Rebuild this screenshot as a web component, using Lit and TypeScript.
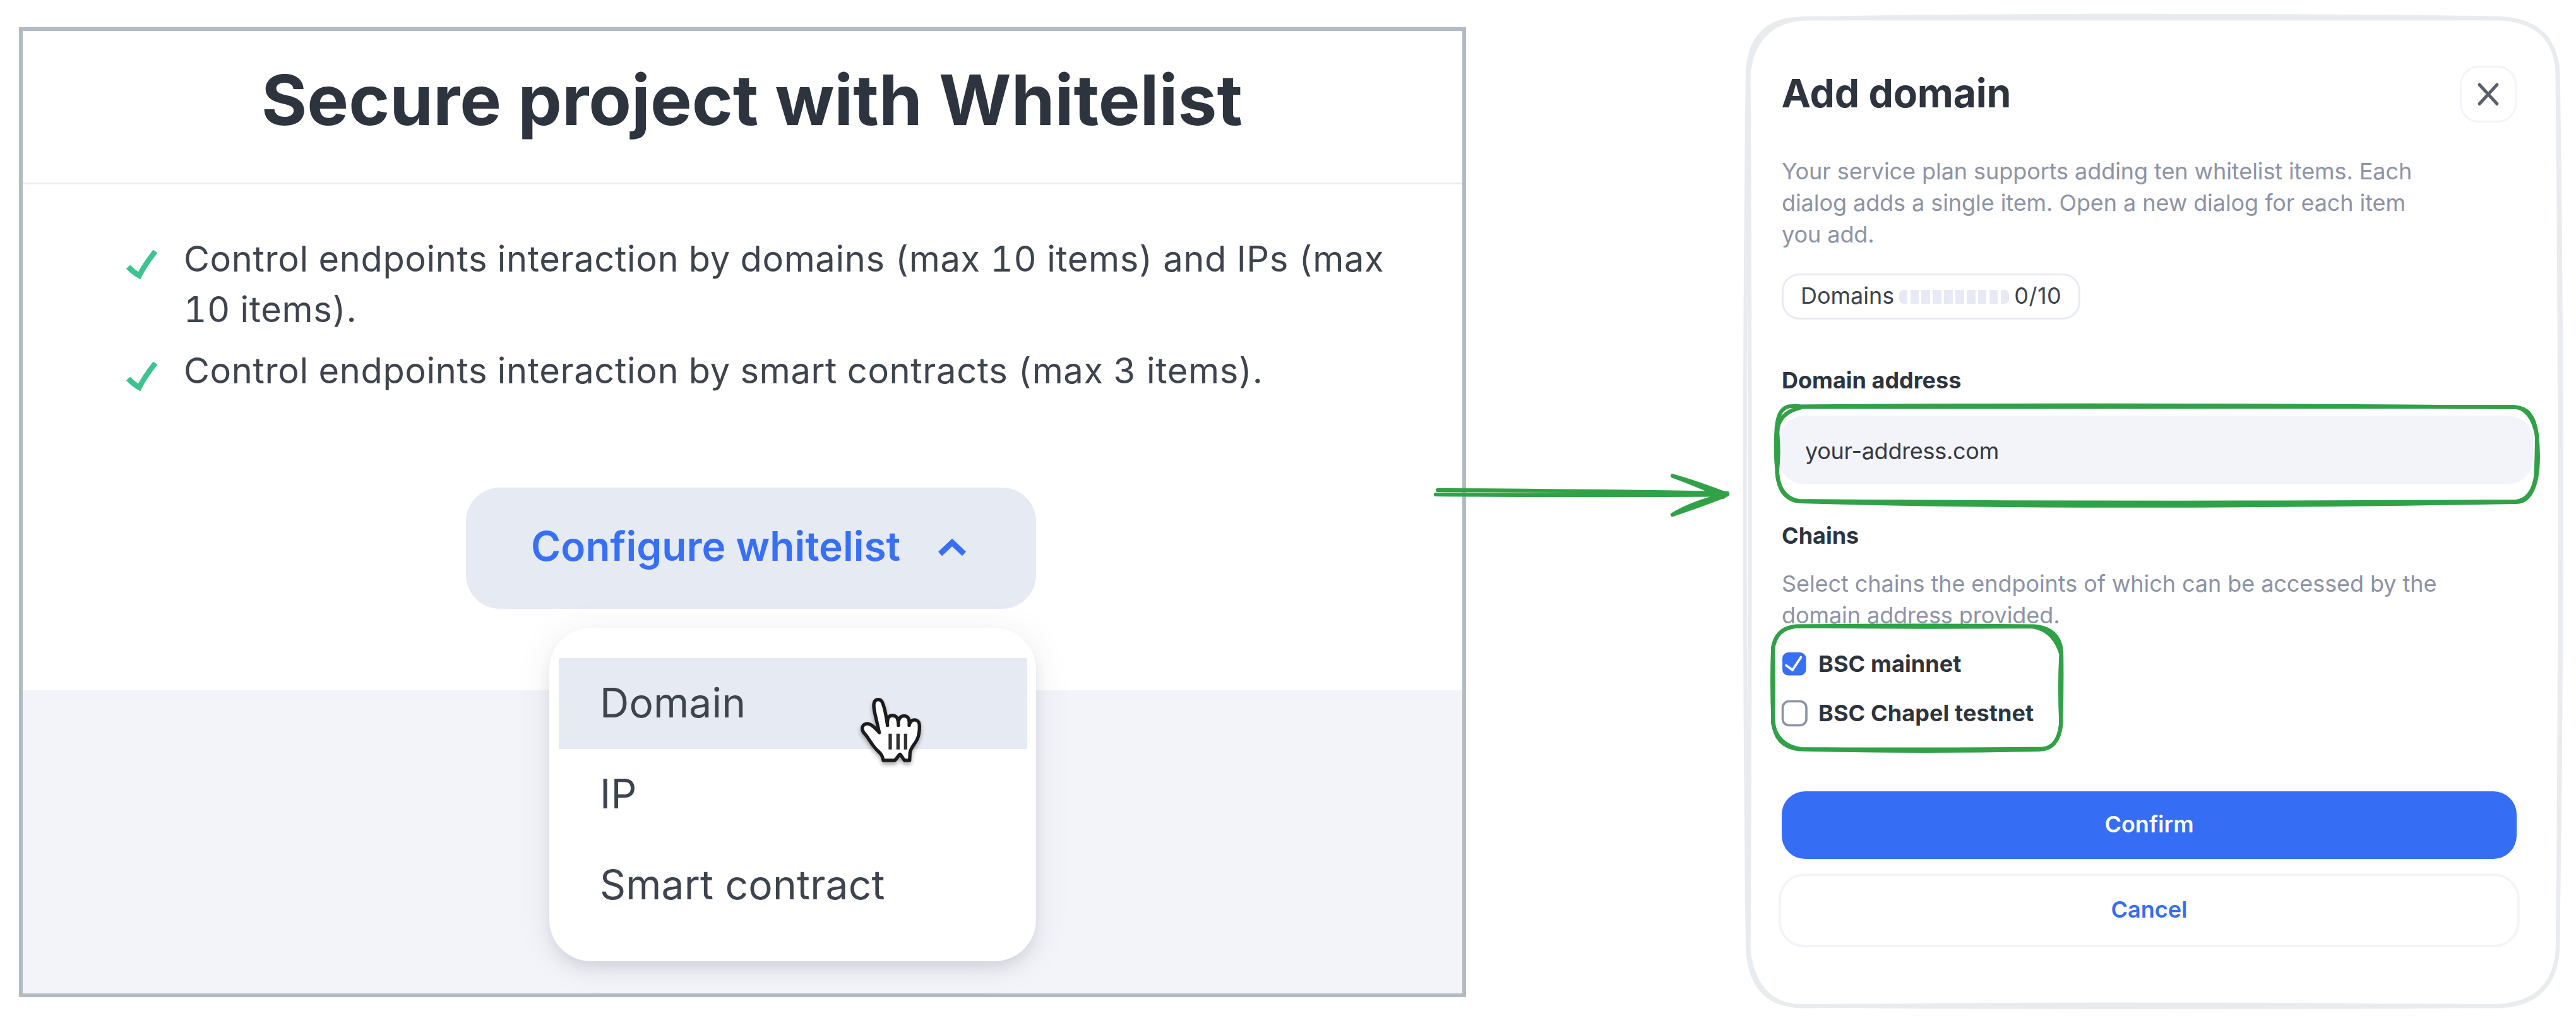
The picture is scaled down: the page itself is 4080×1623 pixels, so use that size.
import { LitElement, html, css, svg } from "lit";
import { customElement, property } from "lit/decorators.js";
import { classMap } from "lit/directives/class-map.js";

const FEATURES = [
  "Control endpoints interaction by domains (max 10 items) and IPs (max 10 items).",
  "Control endpoints interaction by smart contracts (max 3 items).",
];
const MENU = ["Domain", "IP", "Smart contract"];
const CHAINS = [
  { name: "BSC mainnet", checked: true },
  { name: "BSC Chapel testnet", checked: false },
];

/* Left side: project panel with its dropdown open */
@customElement("whitelist-panel")
class WhitelistPanel extends LitElement {
  static styles = css`
    :host { display: block; }
    * { box-sizing: border-box; }
    .panel {
      position: relative;
      display: flex;
      flex-direction: column;
      width: 2292px;
      height: 1536px;
      border: 6px solid #b1bcc1;
      background: #fff;
    }
    .header {
      height: 243px;
      padding: 54px 0 0 378px;
      border-bottom: 3px solid #e7ecf4;
    }
    h1 {
      margin: 0;
      font-size: 110.5px;
      line-height: 110px;
      font-weight: 700;
      color: #2d343e;
      white-space: nowrap;
    }
    .body { height: 801px; padding-top: 77.6px; }
    ul { margin: 0; padding: 0; list-style: none; display: flex; flex-direction: column; gap: 17px; }
    li {
      display: flex;
      padding-left: 164px;
      font-size: 56px;
      line-height: 80px;
      letter-spacing: 0.65px;
      font-variant-numeric: tabular-nums;
      color: #3d444d;
    }
    .tick { flex: none; width: 50px; height: 46px; margin: 26px 41px 0 0; }
    .feature { width: 1930px; }
    .trigger {
      display: flex;
      align-items: center;
      width: 903px;
      height: 192px;
      margin: 145px 0 0 702px;
      padding: 0 0 5px 103px;
      border: 0;
      border-radius: 54px;
      background: #e6eaf3;
      color: #376ff6;
      font: 600 64px/78px Inter, "Liberation Sans", sans-serif;
    }
    .chevron { width: 44px; height: 28px; margin: 2px 0 0 60px; }
    .footer { flex: 1; background: #f3f4f9; }
    .menu {
      position: absolute;
      left: 834px;
      top: 944.5px;
      width: 771px;
      height: 528px;
      padding: 48px 14.5px;
      border-radius: 66px;
      background: #fff;
      box-shadow: 0 14px 24px -4px rgba(45, 52, 80, 0.13), 0 6px 60px rgba(45, 52, 80, 0.08);
    }
    .item {
      display: flex;
      align-items: center;
      height: 144px;
      padding: 0 0 3px 65.5px;
      font-size: 64px;
      letter-spacing: 0.24px;
      color: #3d444d;
    }
    .hover { background: #e6eaf3; }
    .cursor { position: absolute; left: 1264px; top: 1011px; width: 220px; height: 180px; filter: drop-shadow(0 4px 3px rgba(0, 0, 0, 0.35)); }
  `;
  render() {
    return html`<section class="panel">
      <header class="header"><h1>Secure project with Whitelist</h1></header>
      <div class="body">
        <ul>
          ${FEATURES.map(
            (t) => html`<li>
              <svg class="tick" viewBox="0 0 50 46" fill="none" stroke="#3cc38f" stroke-width="8.5" stroke-linejoin="miter">
                <path d="M3 26.5Q11 35 20.5 40.5Q28 25 46 2" />
              </svg>
              <span class="feature">${t}</span>
            </li>`
          )}
        </ul>
        <button class="trigger">
          Configure whitelist
          <svg class="chevron" viewBox="0 0 44 28" fill="none" stroke="#376ff6" stroke-width="9"><path d="M3 25L22 7L41 25" /></svg>
        </button>
      </div>
      <div class="footer"></div>
      <div class="menu">
        ${MENU.map((m, i) => html`<div class=${classMap({ item: true, hover: i === 0 })}>${m}</div>`)}
      </div>
      <svg class="cursor" viewBox="0 0 660 540">
        <path
          fill="#fff" stroke="#1c1c1e" stroke-width="16" stroke-linejoin="round"
          d="M278 300L262 230C252 190 248 165 256 152C264 140 282 140 290 152C300 170 310 215 317 266C314 228 325 219 340 219C358 219 368 228 369 266C366 232 380 221 396 221C413 221 423 232 420 266C424 246 436 238 450 240C464 243 469 252 469 270C469 295 467 312 459 330C448 355 427 370 424 395L422 432H398C390 425 382 405 376 403C370 405 362 425 350 432H297C294 410 285 400 272 388C250 368 240 350 222 322C210 305 195 295 197 278C200 260 218 254 232 260C252 268 264 285 278 300Z"
        />
        <path fill="none" stroke="#333" stroke-width="16" d="M330 305V380M367 305V380M403 305V380" />
      </svg>
    </section>`;
  }
}

@customElement("chain-option")
class ChainOption extends LitElement {
  @property() name = "";
  @property({ type: Boolean }) checked = false;
  static styles = css`
    :host { display: flex; align-items: center; gap: 18px; height: 44px; font-size: 36px; line-height: 44px; font-weight: 700; letter-spacing: 0.1px; color: #2d343e; }
    svg { flex: none; width: 40px; height: 42px; overflow: visible; }
  `;
  render() {
    return html`<svg viewBox="0 0 40 42" fill="none">
        ${this.checked
          ? svg`<rect x="1" y="3" width="37.5" height="36.5" rx="9.5" fill="#376ff6"/><path d="M7 23.5L17 31L30.5 10.5" stroke="#fff" stroke-width="3.8" stroke-linecap="round" stroke-linejoin="round"/>`
          : svg`<rect x="1.5" y="2.5" width="37.5" height="38" rx="10" stroke="#8b92a5" stroke-width="3.6"/>`}
      </svg>
      <span>${this.name}</span>`;
  }
}

/* Right side: the dialog opened by the menu item */
@customElement("domain-dialog")
class DomainDialog extends LitElement {
  static styles = css`
    :host { display: flex; flex-direction: column; width: 1164px; color: #2d343e; font-size: 36px; }
    * { box-sizing: border-box; }
    .head { display: flex; justify-content: space-between; align-items: flex-start; height: 90px; }
    h2 { margin: 0 0 0 -0.5px; font-size: 62.5px; line-height: 87px; font-weight: 700; letter-spacing: -0.2px; }
    .close { width: 90px; height: 90px; padding: 0; border: 3px solid #f2f4fa; border-radius: 30px; background: #fff; }
    .close svg { display: block; width: 84px; height: 84px; }
    p { margin: 0; width: 1070px; line-height: 50.2px; letter-spacing: -0.07px; color: #8c93a5; }
    .intro { width: 1030px; margin-top: 52px; }
    .pill {
      display: flex;
      align-items: center;
      width: 472.6px;
      height: 72.6px;
      margin-top: 36.6px;
      padding-left: 27px;
      border: 3px solid #e7eaf4;
      border-radius: 28px;
      line-height: 44px;
      color: #3d444d;
    }
    .pill span { padding-bottom: 4px; }
    .pill .count { letter-spacing: 0.5px; }
    .meter { display: flex; gap: 4.4px; margin: 0 8px 0 7.4px; border-radius: 7px; overflow: hidden; }
    .meter i { width: 13.5px; height: 22px; background: #e7eaf4; }
    h3 { margin: 0; font-size: 36px; line-height: 44px; font-weight: 700; }
    .h-domain { margin-top: 73.8px; }
    .field {
      display: flex;
      align-items: center;
      width: 1194px;
      height: 109px;
      margin: 34.8px 0 0 -4px;
      padding: 2px 0 0 41px;
      border-radius: 40px;
      background: #f3f4f9;
      color: #36393f;
      letter-spacing: -0.28px;
    }
    .h-chains { margin-top: 58.8px; }
    .hint { margin-top: 28.9px; }
    .chains { display: flex; flex-direction: column; gap: 33.5px; margin-top: 30px; }
    button { font: 600 36px/44px Inter, "Liberation Sans", sans-serif; }
    .confirm { height: 107.5px; margin-top: 101.6px; padding: 0 0 2px; border: 0; border-radius: 37px; background: #356df5; color: #fff; }
    .cancel { height: 117px; margin: 22.5px -5px 0; padding: 0 0 3px; border: 4.5px solid #f3f4f9; border-radius: 41px; background: #fff; color: #356df5; }
  `;
  render() {
    return html`
      <div class="head">
        <h2>Add domain</h2>
        <button class="close" aria-label="Close">
          <svg viewBox="0 0 84 84" fill="none" stroke="#585f6e" stroke-width="5" stroke-linecap="round"><path d="M28 27L56 57.5M56 27L28 57.5" /></svg>
        </button>
      </div>
      <p class="intro">Your service plan supports adding ten whitelist items. Each dialog adds a single item. Open a new dialog for each item you add.</p>
      <div class="pill">
        <span>Domains</span>
        <div class="meter">${Array.from({ length: 10 }, () => html`<i></i>`)}</div>
        <span class="count">0/10</span>
      </div>
      <h3 class="h-domain">Domain address</h3>
      <div class="field">your-address.com</div>
      <h3 class="h-chains">Chains</h3>
      <p class="hint">Select chains the endpoints of which can be accessed by the domain address provided.</p>
      <div class="chains">
        ${CHAINS.map((c) => html`<chain-option .name=${c.name} .checked=${c.checked}></chain-option>`)}
      </div>
      <button class="confirm">Confirm</button>
      <button class="cancel">Cancel</button>
    `;
  }
}

@customElement("app-root")
class AppRoot extends LitElement {
  static styles = css`
    :host { display: block; font-family: Inter, "Liberation Sans", sans-serif; font-weight: 400; }
    .canvas { position: relative; display: flex; align-items: flex-start; width: 4080px; height: 1623px; background: #fff; overflow: hidden; }
    whitelist-panel { flex: none; margin: 43px 0 0 30px; }
    domain-dialog { flex: none; margin: 104px 0 0 500px; }
    .sketch { position: absolute; left: 0; top: 0; width: 4080px; height: 1623px; pointer-events: none; }
  `;
  render() {
    return html`<div class="canvas">
      <whitelist-panel></whitelist-panel>
      <domain-dialog></domain-dialog>
      <svg class="sketch" viewBox="0 0 4080 1623" fill="none" stroke-width="6.2" stroke-linecap="round">
        <!-- dialog outline, two pen passes -->
        <g stroke="#e8ecef">
          <path d="M2850 29.5Q3350 20.5 3955 28.5Q4048 32 4050.5 115Q4058 800 4051 1505Q4044 1591 3950 1593Q3350 1597 2850 1592.5Q2772 1590 2768 1500Q2759.5 800 2768 112Q2774 32 2850 29.5" />
          <path d="M2855 29.5Q3350 28.5 3960 29.5Q4044 34 4051.5 112Q4062 800 4051 1500Q4048 1590 3955 1593.5Q3350 1587.5 2852 1593.5Q2780 1590 2769.5 1505Q2773.5 800 2769.5 118Q2778 36 2855 29.5" />
        </g>
        <g stroke="#31a148">
          <!-- domain address highlight -->
          <path d="M2838 643.5Q3400 639.5 3985 645Q4012 646 4017.5 686Q4022.5 727 4017 757Q4009 795 3985 795Q3300 807 2850 794Q2818 790 2815 750Q2811 710 2814 676Q2817 643 2838 643Q2848 642 2852 644" />
          <path d="M2850 644.5Q3400 646.5 3982 644Q4010 647 4018 690Q4018 728 4016 756Q4010 791 3985 794Q3350 798 2848 793Q2818 787 2814.5 748Q2818 722 2815.5 690Q2812 655 2852 645.5" />
          <!-- chains highlight -->
          <path d="M2848 991.5Q3030 989.5 3222 991.5Q3262 995 3265 1032Q3266 1090 3264 1148Q3260 1186 3230 1187Q3030 1191 2850 1186.5Q2810 1182 2808.5 1140Q2806 1085 2808 1030Q2810 994 2848 991.5" />
          <path d="M2845 991.5Q3030 993.5 3218 992Q3253 997 3264.5 1036Q3261.5 1090 3264.5 1146Q3260 1184 3235 1185.5Q3030 1187.5 2852 1186Q2815 1180 2808 1145Q2809.5 1085 2808 1026Q2814 994 2845 991.5" />
          <!-- arrow -->
          <path d="M2277 776Q2500 777 2736 781M2274 783Q2500 785 2731 783.5" />
          <path d="M2649 753.5Q2684 763 2736 783M2649 753.5Q2692 769 2729 787" />
          <path d="M2649 815Q2677 797 2736 782M2649 815Q2700 798 2732 785" />
        </g>
      </svg>
    </div>`;
  }
}
